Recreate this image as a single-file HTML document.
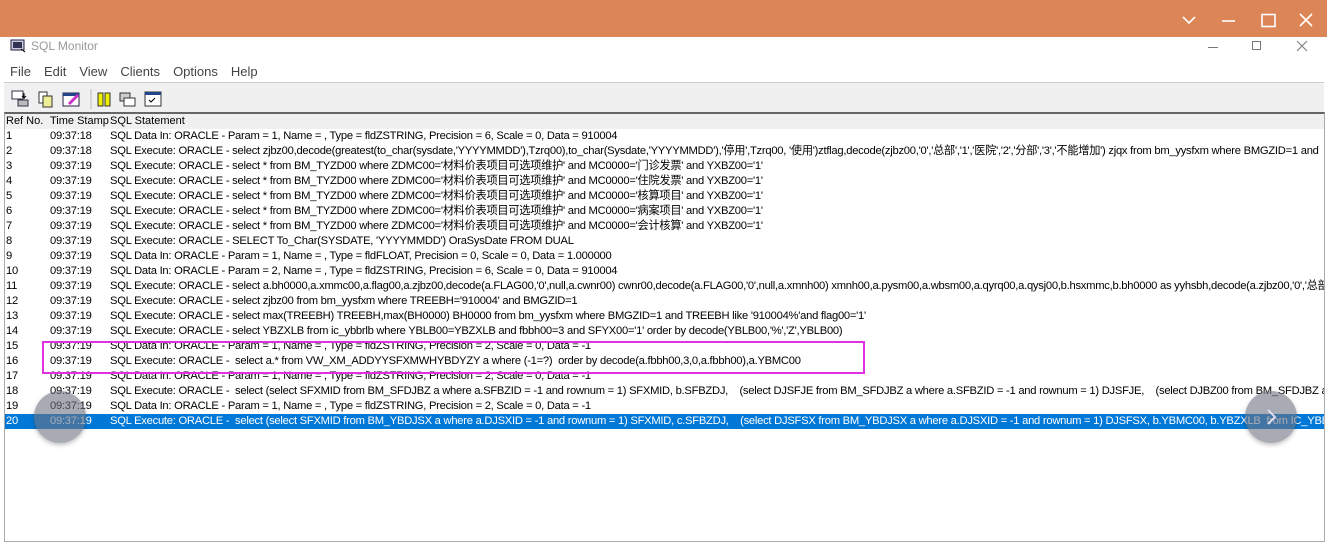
<!DOCTYPE html>
<html><head><meta charset="utf-8"><style>
*{margin:0;padding:0;box-sizing:border-box}
body{width:1327px;height:542px;overflow:hidden;background:#fff;font-family:"Liberation Sans","Noto Sans CJK SC",sans-serif;position:relative}
.top{position:absolute;left:0;top:0;width:1327px;height:37px;background:#dc8657}
.ab{position:absolute;color:#fff}
.title{position:absolute;left:31px;top:39px;font-size:12px;color:#999}
.menu{position:absolute;top:64px;left:10px;font-size:13px;color:#444}
.menu span{margin-right:13px}
.tb{position:absolute;left:4px;top:82px;width:1320px;height:30px;background:#f0f0f0;border-top:1px solid #ccc}
.list{position:absolute;left:4px;top:112px;width:1321px;height:430px;border:1px solid #aaa;border-top:2px solid #666;background:#fff;overflow:hidden}
.hdr{position:absolute;left:0;top:0;width:100%;height:15px;background:#f0f0f0;font-size:11px;line-height:15px;color:#000}
.r{position:absolute;left:0;width:1400px;height:15px;font-size:11.2px;line-height:15px;white-space:pre;color:#000;letter-spacing:-0.25px}
.r span{position:absolute}
.a{left:1px}.b{left:45px}.c{left:105px}
.sel{background:#0078d7;color:#fff}
.circ{position:absolute;width:52px;height:52px;border-radius:50%;background:rgba(110,115,130,.6);box-shadow:0 2px 4px rgba(0,0,0,.25)}
</style></head><body>
<div class="top"></div>
<svg class="ab" style="left:1180px;top:12px" width="140" height="18" viewBox="0 0 140 18" fill="none" stroke="#fff" stroke-width="1.6">
<path d="M3 5l6 6 6-6"/><path d="M42 9h13"/><rect x="82" y="2.5" width="13" height="12"/><path d="M120 2l12 12M132 2l-12 12"/></svg>
<svg style="position:absolute;left:10px;top:39px" width="17" height="14"><rect x="1" y="1" width="13" height="10" fill="#ccd" stroke="#224"/><rect x="3" y="3" width="9" height="6" fill="#335"/><path d="M11 10l4 3" stroke="#000"/></svg>
<div class="title">SQL Monitor</div>
<svg style="position:absolute;left:1200px;top:40px" width="110" height="12" fill="none" stroke="#777"><path d="M8 7.5h10"/><rect x="52.5" y="1.5" width="8" height="8"/><path d="M97 1l10 10M107 1l-10 10"/></svg>
<div class="menu"><span>File</span><span>Edit</span><span>View</span><span>Clients</span><span>Options</span><span>Help</span></div>
<div class="tb">
<svg width="180" height="28" style="position:absolute;left:6px;top:6px">
<rect x="2" y="2" width="11" height="8" fill="#fff" stroke="#334"/><rect x="8" y="11" width="10" height="6" fill="#bbb" stroke="#334"/><path d="M14 4v5l-2-2m2 2l2-2" stroke="#000" fill="none"/>
<rect x="29" y="3" width="8" height="11" fill="#fff" stroke="#333"/><rect x="33" y="7" width="9" height="11" fill="#ee9" stroke="#333"/>
<rect x="53" y="4" width="16" height="13" fill="#fff" stroke="#224"/><rect x="53" y="4" width="16" height="3" fill="#248"/><path d="M59 15l9-9" stroke="#c3c" stroke-width="3"/>
<path d="M81 0v20" stroke="#bbb"/>
<rect x="88" y="4" width="5" height="13" fill="#ee0" stroke="#333"/><rect x="95" y="4" width="5" height="13" fill="#ee0" stroke="#333"/>
<rect x="110" y="4" width="10" height="8" fill="#ccc" stroke="#333"/><rect x="114" y="9" width="11" height="8" fill="#fff" stroke="#333"/>
<rect x="135" y="3" width="16" height="14" fill="#fff" stroke="#333"/><rect x="135" y="3" width="16" height="3" fill="#248"/><path d="M139 11l2 2 4-4" stroke="#000" fill="none"/>
</svg></div>
<div class="list">
<div class="hdr"><span style="position:absolute;left:1px">Ref No.</span><span style="position:absolute;left:45px">Time Stamp</span><span style="position:absolute;left:105px">SQL Statement</span></div>
<div class="r" style="top:15px"><span class="a">1</span><span class="b">09:37:18</span><span class="c">SQL Data In: ORACLE - Param = 1, Name = , Type = fldZSTRING, Precision = 6, Scale = 0, Data = 910004</span></div>
<div class="r" style="top:30px"><span class="a">2</span><span class="b">09:37:18</span><span class="c">SQL Execute: ORACLE - select zjbz00,decode(greatest(to_char(sysdate,'YYYYMMDD'),Tzrq00),to_char(Sysdate,'YYYYMMDD'),'停用',Tzrq00, '使用')ztflag,decode(zjbz00,'0','总部','1','医院','2','分部','3','不能增加') zjqx from bm_yysfxm where BMGZID=1 and</span></div>
<div class="r" style="top:45px"><span class="a">3</span><span class="b">09:37:19</span><span class="c">SQL Execute: ORACLE - select * from BM_TYZD00 where ZDMC00='材料价表项目可选项维护' and MC0000='门诊发票' and YXBZ00='1'</span></div>
<div class="r" style="top:60px"><span class="a">4</span><span class="b">09:37:19</span><span class="c">SQL Execute: ORACLE - select * from BM_TYZD00 where ZDMC00='材料价表项目可选项维护' and MC0000='住院发票' and YXBZ00='1'</span></div>
<div class="r" style="top:75px"><span class="a">5</span><span class="b">09:37:19</span><span class="c">SQL Execute: ORACLE - select * from BM_TYZD00 where ZDMC00='材料价表项目可选项维护' and MC0000='核算项目' and YXBZ00='1'</span></div>
<div class="r" style="top:90px"><span class="a">6</span><span class="b">09:37:19</span><span class="c">SQL Execute: ORACLE - select * from BM_TYZD00 where ZDMC00='材料价表项目可选项维护' and MC0000='病案项目' and YXBZ00='1'</span></div>
<div class="r" style="top:105px"><span class="a">7</span><span class="b">09:37:19</span><span class="c">SQL Execute: ORACLE - select * from BM_TYZD00 where ZDMC00='材料价表项目可选项维护' and MC0000='会计核算' and YXBZ00='1'</span></div>
<div class="r" style="top:120px"><span class="a">8</span><span class="b">09:37:19</span><span class="c">SQL Execute: ORACLE - SELECT To_Char(SYSDATE, 'YYYYMMDD') OraSysDate FROM DUAL</span></div>
<div class="r" style="top:135px"><span class="a">9</span><span class="b">09:37:19</span><span class="c">SQL Data In: ORACLE - Param = 1, Name = , Type = fldFLOAT, Precision = 0, Scale = 0, Data = 1.000000</span></div>
<div class="r" style="top:150px"><span class="a">10</span><span class="b">09:37:19</span><span class="c">SQL Data In: ORACLE - Param = 2, Name = , Type = fldZSTRING, Precision = 6, Scale = 0, Data = 910004</span></div>
<div class="r" style="top:165px"><span class="a">11</span><span class="b">09:37:19</span><span class="c">SQL Execute: ORACLE - select a.bh0000,a.xmmc00,a.flag00,a.zjbz00,decode(a.FLAG00,'0',null,a.cwnr00) cwnr00,decode(a.FLAG00,'0',null,a.xmnh00) xmnh00,a.pysm00,a.wbsm00,a.qyrq00,a.qysj00,b.hsxmmc,b.bh0000 as yyhsbh,decode(a.zjbz00,'0','总部',</span></div>
<div class="r" style="top:180px"><span class="a">12</span><span class="b">09:37:19</span><span class="c">SQL Execute: ORACLE - select zjbz00 from bm_yysfxm where TREEBH='910004' and BMGZID=1</span></div>
<div class="r" style="top:195px"><span class="a">13</span><span class="b">09:37:19</span><span class="c">SQL Execute: ORACLE - select max(TREEBH) TREEBH,max(BH0000) BH0000 from bm_yysfxm where BMGZID=1 and TREEBH like '910004%'and flag00='1'</span></div>
<div class="r" style="top:210px"><span class="a">14</span><span class="b">09:37:19</span><span class="c">SQL Execute: ORACLE - select YBZXLB from ic_ybbrlb where YBLB00=YBZXLB and fbbh00=3 and SFYX00='1' order by decode(YBLB00,'%','Z',YBLB00)</span></div>
<div class="r" style="top:225px"><span class="a">15</span><span class="b">09:37:19</span><span class="c">SQL Data In: ORACLE - Param = 1, Name = , Type = fldZSTRING, Precision = 2, Scale = 0, Data = -1</span></div>
<div class="r" style="top:240px"><span class="a">16</span><span class="b">09:37:19</span><span class="c">SQL Execute: ORACLE -  select a.* from VW_XM_ADDYYSFXMWHYBDYZY a where (-1=?)  order by decode(a.fbbh00,3,0,a.fbbh00),a.YBMC00</span></div>
<div class="r" style="top:255px"><span class="a">17</span><span class="b">09:37:19</span><span class="c">SQL Data In: ORACLE - Param = 1, Name = , Type = fldZSTRING, Precision = 2, Scale = 0, Data = -1</span></div>
<div class="r" style="top:270px"><span class="a">18</span><span class="b">09:37:19</span><span class="c">SQL Execute: ORACLE -  select (select SFXMID from BM_SFDJBZ a where a.SFBZID = -1 and rownum = 1) SFXMID, b.SFBZDJ,    (select DJSFJE from BM_SFDJBZ a where a.SFBZID = -1 and rownum = 1) DJSFJE,    (select DJBZ00 from BM_SFDJBZ a w</span></div>
<div class="r" style="top:285px"><span class="a">19</span><span class="b">09:37:19</span><span class="c">SQL Data In: ORACLE - Param = 1, Name = , Type = fldZSTRING, Precision = 2, Scale = 0, Data = -1</span></div>
<div class="r sel" style="top:300px;width:1319px;overflow:hidden"><span class="a">20</span><span class="b">09:37:19</span><span class="c">SQL Execute: ORACLE -  select (select SFXMID from BM_YBDJSX a where a.DJSXID = -1 and rownum = 1) SFXMID, c.SFBZDJ,    (select DJSFSX from BM_YBDJSX a where a.DJSXID = -1 and rownum = 1) DJSFSX, b.YBMC00, b.YBZXLB  from IC_YBBRL</span></div>
</div>
<div style="position:absolute;left:42px;top:341px;width:823px;height:33px;border:2px solid #e030e0"></div>
<div class="circ" style="left:34px;top:391px"></div>
<div class="circ" style="left:1245px;top:391px"></div>
<svg style="position:absolute;left:1264px;top:408px" width="14" height="18" fill="none" stroke="#dde" stroke-width="2"><path d="M4 2l7 7-7 7"/></svg>
</body></html>
